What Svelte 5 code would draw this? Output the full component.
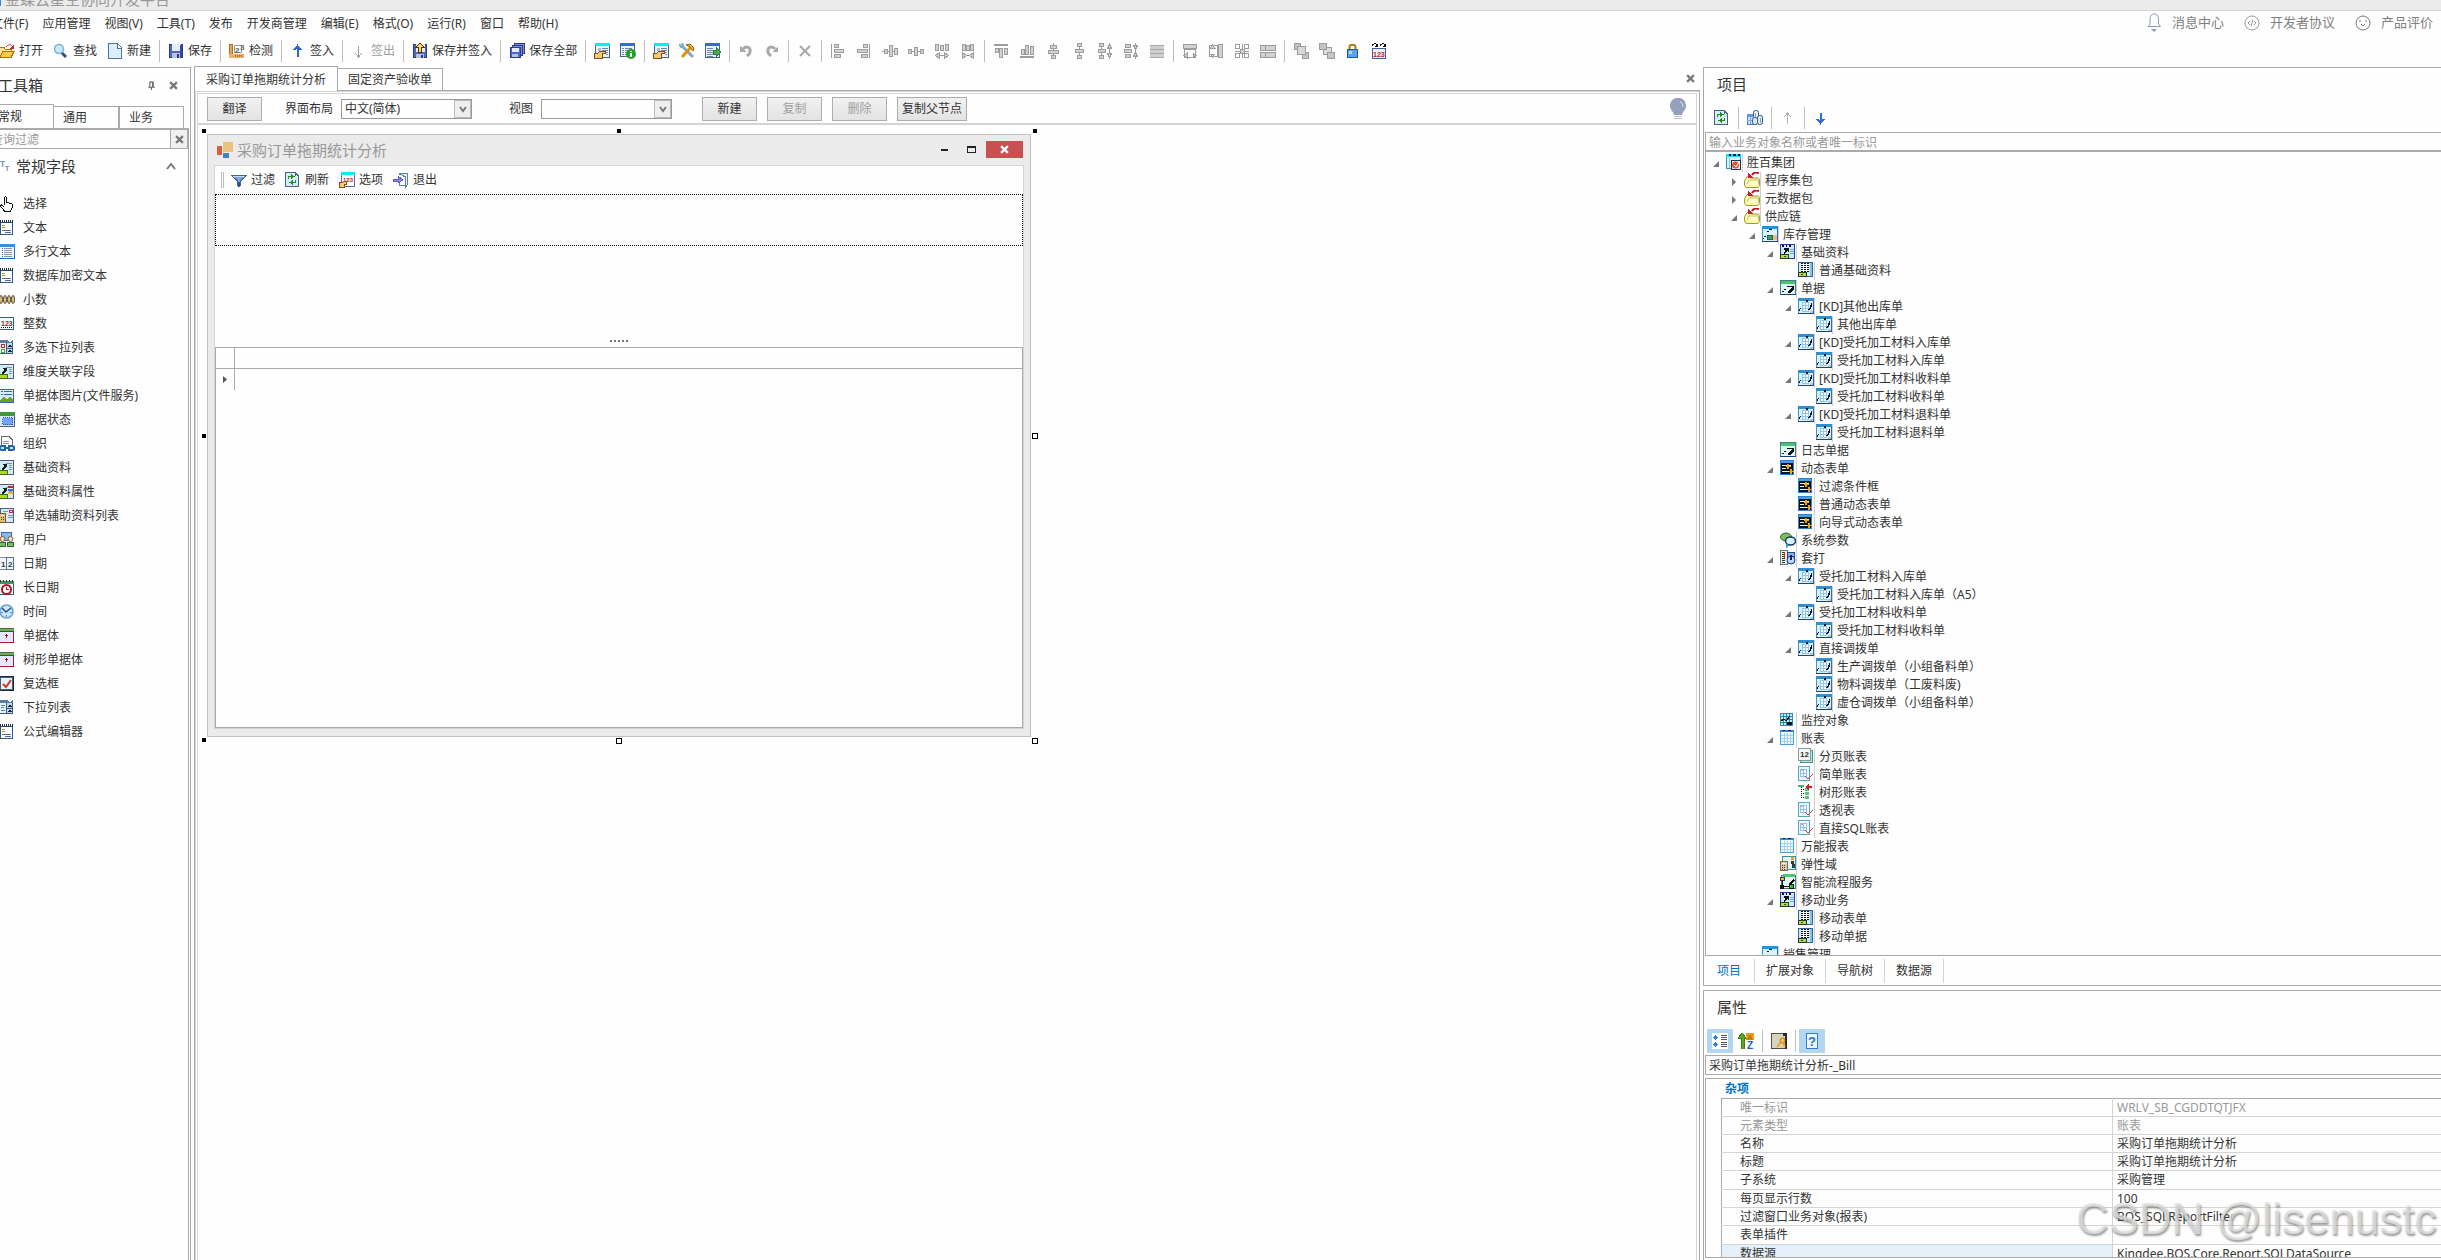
<script>
  const r = (x, y, w, h, f) => `<rect x="${x}" y="${y}" width="${w}" height="${h}" fill="${f}"/>`;
  const p = (d, f, s = 'none', w = 1) => `<path d="${d}" fill="${f}" stroke="${s}" stroke-width="${w}"/>`;
  const box = (x, y, w, h, f, s) => `<rect x="${x + 0.5}" y="${y + 0.5}" width="${w - 1}" height="${h - 1}" fill="${f}" stroke="${s}"/>`;
  const soft = (s) => `<g shape-rendering="auto">${s}</g>`;
  const num = (t, x, y, size, f) => `<text x="${x}" y="${y}" font-family="Liberation Sans, sans-serif" font-weight="700" font-size="${size}" fill="${f}">${t}</text>`;

  const G = '#9c9c9c';
  const L = '#d2d2d2';
  const formHand =
    box(1, 0, 15, 15, '#eef3fb', '#47617f') + r(1, 0, 15, 3, '#12e8f4') + r(8, 5, 6, 1, '#6d87ab') + r(8, 7, 6, 1, '#6d87ab') + r(8, 9, 6, 1, '#6d87ab') + r(12, 11, 2, 1, '#6d87ab') + r(4, 5, 3, 3, '#a9bdd8') +
    p('M0.5 10.5H3L6 8.5H11V10.5H8V15.5H0.5Z', '#f3c877', '#7a5320');
  const checkBase = box(0, 0, 15, 15, '#d6eaf2', '#4a5f80') + r(7, 3, 6, 1, '#7e95a8') + r(10, 5, 3, 1, '#7e95a8') + r(10, 7, 3, 1, '#7e95a8') + r(10, 9, 3, 1, '#7e95a8') +
    p('M2 9L5 6L4 4H8V8L7 7L4 10Z', '#13201c') + box(0, 10, 9, 5, '#a8dc1d', '#47701a');
  const sheet = r(0, 0, 16, 15, '#d9f2fc') + r(0, 0, 16, 3, '#2f8fd0') + r(0, 3, 1, 12, '#3f93c8') + r(0, 15, 16, 1, '#2a3e7d') + r(15, 3, 1, 12, '#3f63a8');
  const bill = sheet + r(5, 4, 6, 9, '#ffffff') + [4, 7, 10].map((x) => r(x, 4, 1, 9, '#8cc6f4')).join('') + [4, 7, 10, 13].map((y) => r(4, y, 7, 1, '#8cc6f4')).join('') + r(8, 2, 2, 2, '#0c1522') +
    p('M14 5V8L12 12H10V11L12 9L13 5Z', '#0c1522') + r(1, 11, 1, 2, '#0c1522') + r(2, 10, 1, 1, '#0c1522') + r(12, 13, 3, 2, '#a7d3b4');
  const greenBill = r(0, 2, 16, 13, '#e0f6f1') + r(1, 0, 14, 4, '#4cc46e') + box(0, 0, 16, 15, 'none', '#3f7e88') + p('M7 6H14V9L11 13H8V11L10 10L12 7H7Z', '#10191c') + r(2, 11, 2, 1, '#10191c') + r(4, 9, 2, 1, '#10191c') + r(0, 14, 16, 1, '#203a78');
  const folder = soft(p('M0.5 9L3 4.5H6.5L7.5 6H14.5L15.5 8V13.5L14 15.5H2L0.5 13Z', '#fdf9a4', '#9a9c42') + p('M3 12L5 8H14L15 13', '#fffcd0', '#c3c070') + p('M15 1C11 0 9 1 8 3', 'none', '#c91622', 2)) + p('M4 1V6H10Z', '#d21b26');
  const keyed = box(0, 0, 15, 15, '#c9ecf6', '#2f63a2') + r(3, 1, 8, 9, '#ffffff') + [1, 3, 5, 7, 9].map((y) => r(3, y, 2, 1, '#111') + r(6, y, 2, 1, '#111') + r(9, y, 2, 1, '#111')).join('') + r(12, 1, 2, 13, '#88c4e0') + box(0, 10, 9, 5, '#b3e41d', '#26391c') + r(3, 12, 2, 1, '#26391c');
  const base2 = box(0, 0, 15, 15, '#c9ecf6', '#2f3b98') + r(2, 1, 2, 2, '#111') + r(6, 1, 1, 2, '#111') + r(9, 1, 2, 2, '#111') + r(10, 5, 4, 1, '#79a6d0') + r(10, 7, 4, 1, '#79a6d0') + r(10, 9, 4, 1, '#79a6d0') + p('M3 9L5 7L4 6V4H9V8H8L7 7L4 10Z', '#111') + box(0, 10, 9, 5, '#b3e41d', '#26391c') + r(4, 12, 2, 1, '#26391c');
  const dyn = r(0, 0, 14, 15, '#0b1219') + r(0, 0, 14, 3, '#3ba4e6') + box(0, 0, 14, 15, 'none', '#2a82cf') + r(2, 5, 9, 1, '#f2f2f2') + r(2, 8, 4, 1, '#f2f2f2') + r(2, 11, 7, 1, '#f2f2f2') + r(7, 4, 2, 5, '#e9a800') + r(6, 6, 5, 1, '#e9a800') + r(10, 9, 2, 5, '#e9a800') + r(9, 11, 5, 1, '#e9a800');
  const gridSheet = box(0, 0, 14, 15, '#eef8fe', '#4aa0dc') + r(0, 0, 14, 2, '#2690dd') + r(3, 0, 2, 1, '#0c1522') + r(8, 0, 3, 1, '#0c1522') + [4, 7, 10].map((x) => r(x, 3, 1, 11, '#a4d2f2')).join('') + [5, 8, 11].map((y) => r(1, y, 12, 1, '#a4d2f2')).join('');
  const redCheckSheet = box(0, 0, 12, 15, '#ecf4fd', '#56a8b5') + r(2, 3, 7, 8, '#8ec0f2') + r(3, 5, 2, 2, '#fff') + r(6, 4, 2, 3, '#fff') + r(3, 8, 2, 2, '#fff') + r(6, 8, 2, 2, '#fff') + soft(p('M7 10L10 13L15 8', 'none', '#dc2f38', 1));
  const entry = r(0, 0, 15, 3, '#6fae55') + box(0, 3, 15, 12, '#e2e9ff', '#b01623') + r(7, 6, 1, 4, '#b01623') + r(6, 7, 3, 1, '#b01623') + r(0, 0, 15, 1, '#47704f');
  const refresh = p('M0.5 0.5H10L13.5 4V14.5H0.5Z', '#d6ecf8', '#46637f') + r(10, 1, 1, 3, '#46637f') + r(3, 4, 1, 3, '#228c1d') + r(3, 4, 5, 1, '#228c1d') + p('M6 2L10 4.500L6 7Z', '#228c1d') + r(10, 8, 1, 3, '#228c1d') + r(6, 10, 5, 1, '#228c1d') + p('M8 8L4 10.500L8 13Z', '#228c1d');
  const note = box(1, 2, 13, 13, '#ffffff', '#35587f') + [1, 3, 5, 7, 9, 11, 13].map((x) => r(x, 0, 1, 3, '#20324a')).join('') + r(3, 5, 3, 1, '#b49a2c') + r(3, 7, 3, 1, '#b49a2c') + r(3, 10, 9, 1, '#4d6ea0') + r(6, 12, 6, 1, '#4d6ea0');
  const listBase = box(0, 0, 14, 14, '#e9f3fb', '#3d5b80') + r(0, 0, 14, 3, '#5a7da5') + r(8, 3, 5, 10, '#c1d6e8') + r(7, 3, 1, 11, '#3d5b80') + r(8, 8, 6, 1, '#3d5b80') + p('M9 7H13L11 4Z', '#17273a') + p('M9 12H13L11 9Z', '#17273a') + p('M8 0H13L11 3Z', '#fff');

  const icons = {
    open: p('M0.5 14V4.5H5L6.5 6.5H12V9', '#ffe293', '#a9731a') + p('M0.5 14.5L4 8.5H15L12 14.5Z', '#ffc94a', '#a9731a') + soft(p('M7 4C9 1 12 1 14 4', 'none', '#d8231c', 1)) + p('M15 1V6H10Z', '#d8231c'),
    find: soft('<circle cx="6" cy="6" r="4.5" fill="#c5e8f8" stroke="#7fb0cf" stroke-width="1.5"/>' + p('M9 10L13 14', 'none', '#31527a', 3)),
    new: p('M1.5 0.5H10L14.5 5V15.5H1.5Z', '#dcefff', '#4c7398') + p('M10 1V5H14', '#ffffff', '#4c7398'),
    save: box(1, 1, 14, 14, '#5067c4', '#2b3a88') + r(4, 1, 9, 7, '#e6ecfb') + r(4, 10, 8, 5, '#b9c0da') + r(9, 11, 2, 4, '#2b3a88') + r(12, 2, 2, 12, '#3c4aa2'),
    test: box(0, 1, 4, 14, '#e2a45c', '#b06d25') + r(0, 11, 15, 4, '#e9b06c') + [6, 8, 10, 12].map((x) => r(x, 12, 1, 2, '#b06d25')).join('') + box(5, 2, 8, 8, '#ffffff', '#9a9a9a') + num('2', 6, 10, 8, '#555') + num('3', 11, 7, 8, '#666'),
    up: p('M7.5 14V3M4 7L7.5 3L11 7', 'none', '#2f63cf', 2),
    down: p('M7.5 3V13M4 9L7.5 13L11 9', 'none', '#2f6fdc', 2),
    upGray: p('M7.5 14V3M4 7L7.5 3L11 7', 'none', '#b0b0b0', 1),
    downGray: p('M7.5 3V14M4 10L7.5 14L11 10', 'none', '#a2a2a2', 1),
    saveIn: box(1, 1, 14, 14, '#5067c4', '#2b3a88') + r(4, 1, 9, 8, '#f5eacb') + r(4, 11, 8, 4, '#b9c0da') + p('M8 0L12 4H9.5V9H6.5V4H4Z', '#ffd368', '#3a3420') + r(9, 12, 2, 3, '#2b3a88'),
    saveAll: box(5, 0, 11, 11, '#8390d8', '#2b3a88') + box(3, 2, 11, 11, '#8390d8', '#2b3a88') + box(1, 4, 11, 11, '#5067c4', '#2b3a88') + r(3, 5, 7, 4, '#e6ecfb') + r(3, 11, 6, 3, '#b9c0da'),
    formHand,
    formInfo: box(0, 0, 15, 14, '#eef3fb', '#47617f') + r(0, 0, 15, 3, '#3b68d6') + [5, 7, 9, 11].map((y) => r(2, y, 2, 1, '#6d87ab') + r(5, y, 7, 1, '#6d87ab')).join('') + soft('<circle cx="11" cy="11" r="5" fill="#23a021"/>') + r(10, 8, 2, 1, '#fff') + r(10, 10, 2, 4, '#fff'),
    tools: soft(p('M2 2L14 14', 'none', '#7fa9c8', 3) + p('M3 14L12 4', 'none', '#e0940c', 3) + p('M7 2L11 1L15 5L14 8L11 4Z', '#f3b816', '#8d6212') + p('M0 1L2 4L4 3L3 0', 'none', '#7fa9c8', 2)),
    formGo: box(0, 0, 15, 15, '#eef3fb', '#47617f') + r(0, 0, 15, 3, '#3b68d6') + [5, 7, 9, 11, 13].map((y) => r(2, y, 6, 1, '#6d87ab')).join('') + p('M8 7H11V4L16 9L11 14V11H8Z', '#49ab45', '#2f7d32'),
    undo: soft(p('M5 6C9 2 13 5 12 9C12 11 10 12 9 13', 'none', '#a8a8a8', 3)) + p('M2 3V9H8Z', '#a8a8a8'),
    redo: soft(p('M11 6C7 2 3 5 4 9C4 11 6 12 7 13', 'none', '#a8a8a8', 3)) + p('M14 3V9H8Z', '#a8a8a8'),
    del: soft(p('M3 3L13 13M13 3L3 13', 'none', '#a8a8a8', 2)),
    alL: r(1, 1, 1, 14, G) + box(4, 1, 5, 4, L, G) + box(4, 6, 10, 4, L, G) + box(4, 11, 7, 4, L, G),
    alR: r(13, 1, 1, 14, G) + box(7, 1, 5, 4, L, G) + box(1, 6, 11, 4, L, G) + box(5, 11, 7, 4, L, G),
    alC: r(0, 8, 16, 1, G) + box(2, 6, 4, 5, L, G) + box(7, 2, 4, 12, L, G) + box(12, 5, 4, 7, L, G),
    alM: r(0, 8, 16, 1, G) + box(0, 6, 4, 5, L, G) + box(6, 4, 4, 9, L, G) + box(12, 6, 4, 5, L, G),
    spH: box(1, 1, 4, 7, L, G) + box(6, 2, 4, 6, L, G) + box(11, 1, 4, 7, L, G) + r(2, 12, 12, 1, G) + p('M5.500 9.500V15.500L1.500 12.500Z', L, G) + p('M10.500 9.500V15.500L14.500 12.500Z', L, G),
    spH2: box(2, 1, 4, 7, L, G) + box(6, 2, 4, 6, L, G) + box(10, 1, 4, 7, L, G) + r(2, 12, 12, 1, G) + p('M2.500 9.500V15.500L6.500 12.500Z', L, G) + p('M13.500 9.500V15.500L9.500 12.500Z', L, G),
    alT: r(1, 1, 14, 2, G) + box(2, 5, 4, 5, L, G) + box(6, 5, 4, 10, L, G) + box(11, 5, 4, 7, L, G),
    alB: r(1, 13, 14, 2, G) + box(2, 6, 4, 6, L, G) + box(6, 2, 4, 10, L, G) + box(11, 3, 4, 9, L, G),
    alV: r(8, 0, 1, 16, G) + box(5, 2, 7, 4, L, G) + box(3, 7, 11, 4, L, G) + box(6, 12, 5, 4, L, G),
    alV2: r(8, 0, 1, 16, G) + box(6, 0, 5, 4, L, G) + box(4, 6, 9, 4, L, G) + box(6, 12, 5, 4, L, G),
    spV: r(4, 1, 1, 14, G) + box(2, 0, 5, 4, L, G) + box(1, 6, 8, 4, L, G) + box(2, 12, 5, 4, L, G) + r(12, 2, 1, 12, G) + p('M10.500 5.500L12.500 1.500L14.500 5.500ZM10.500 10.500L12.500 14.500L14.500 10.500Z', L, G),
    spV2: box(2, 1, 6, 4, L, G) + box(1, 6, 8, 4, L, G) + box(2, 11, 6, 4, L, G) + r(12, 0, 1, 16, G) + p('M10.500 2.500L12.500 6.500L14.500 2.500ZM10.500 13.500L12.500 9.500L14.500 13.500Z', L, G),
    rows: r(1, 2, 14, 13, '#cfcfcf') + [2, 6, 10, 14].map((y) => r(1, y, 14, 1, '#a8a8a8')).join(''),
    sameW: box(1, 1, 14, 5, L, G) + box(2, 6, 12, 9, '#fff', G) + p('M5 10V15L2 12.5ZM11 10V15L14 12.5Z', L, G),
    sameH: box(10, 1, 5, 14, L, G) + box(1, 2, 9, 12, '#fff', G) + p('M2 5L4.5 2L7 5ZM2 11L4.5 14L7 11Z', L, G),
    sameB: box(1, 1, 5, 5, '#fff', G) + box(10, 1, 5, 5, '#fff', G) + box(1, 10, 5, 5, '#fff', G) + box(10, 10, 5, 5, '#fff', G) + r(8, 1, 1, 14, G) + r(1, 8, 14, 1, G) + box(6, 6, 5, 5, L, G),
    split: box(0, 2, 16, 6, L, G) + box(0, 9, 16, 6, L, G) + r(5, 2, 1, 6, G) + r(5, 9, 1, 6, G),
    front: box(1, 0, 7, 7, '#c4c4c4', G) + box(9, 9, 7, 7, '#c4c4c4', G) + box(4, 3, 9, 9, '#d8d8d8', G),
    back: box(4, 4, 9, 8, '#dcdcdc', G) + box(0, 0, 8, 7, '#c4c4c4', G) + box(8, 9, 8, 7, '#c4c4c4', G),
    lock: soft(p('M4.5 7V4C4.5 1 10.5 1 10.5 4V7', 'none', '#b87718', 2)) + box(2, 6, 11, 9, '#58a6ea', '#24598f') + r(4, 8, 3, 3, '#a9d5f7'),
    tabOrder: p('M1 3C2 0 5 0 6 2M9 3C10 0 13 0 14 2', 'none', '#111') + p('M7 0V4H4ZM15 0V4H12Z', '#111') + box(1, 5, 14, 11, '#eef3ff', '#4457a8') + num('123', 2, 14, 7, '#c01822'),
    tt: num('T', 0, 10, 12, '#6d93cf') + num('T', 7, 15, 11, '#6d93cf'),
    hand: p('M5.5 9V2L6.5 0.5L7.5 2V6L13 8V12L11.5 15.5H6L1.5 10.5L2.5 8.5L5 11', '#fff', '#111'),
    note,
    lines: box(0, 0, 16, 15, '#f3f8fe', '#2c69b3') + r(0, 0, 16, 3, '#3f8bd8') + [4, 6, 8, 10, 12].map((y) => r(3, y, 1, 1, '#2c69b3') + r(5, y, 8, 1, '#8d98a6')).join(''),
    decimal: soft([2, 6, 10, 14].map((x) => `<ellipse cx="${x}" cy="7.5" rx="1.5" ry="4" fill="#e5c98f" stroke="#4a4133"/>`).join('')) + r(0, 12, 1, 1, '#333'),
    int: box(0, 1, 15, 13, '#f5f6fb', '#3d5b80') + num('123', 2, 10, 7, '#b01822') + [2, 4, 6, 8, 10, 12].map((x) => r(x, 11, 1, 1, '#111')).join(''),
    multi: listBase + box(2, 4, 4, 4, '#fff', '#c1272d') + box(2, 9, 4, 4, '#fff', '#4aa532'),
    drop: listBase + r(2, 5, 4, 1, '#3f83c8') + r(2, 7, 3, 1, '#3f83c8') + r(2, 10, 4, 1, '#3f83c8'),
    base: checkBase,
    pic: box(0, 1, 15, 14, '#d7ecfa', '#2c69b3') + r(2, 3, 2, 1, '#2c69b3') + r(5, 3, 8, 1, '#2c69b3') + r(2, 6, 2, 1, '#2c69b3') + r(5, 6, 8, 1, '#2c69b3') + p('M1 14V12L5 9L8 11L11 9L14 11V14Z', '#6aa32c'),
    status: box(0, 0, 16, 15, '#d8e8fb', '#47617f') + r(0, 0, 16, 4, '#3f9a3d') + '<rect x="3.5" y="5.5" width="10" height="7" fill="#6fa4ff" stroke="#2c4f9c" stroke-dasharray="1 1"/>',
    org: p('M2.5 10V0.5H10L13.5 4V10', '#fff', '#6a6a6a') + r(4, 5, 6, 1, '#999') + r(4, 7, 6, 1, '#999') + soft(p('M3 10H6V14H3C0 14 0 10 3 10ZM10 10H13C16 10 16 14 13 14H10ZM5 12H11', '#cfe6fa', '#1d64a8', 2)),
    baseAttr: checkBase + r(9, 2, 5, 2, '#e01b1b') + r(9, 5, 5, 2, '#3f6fe0') + r(9, 8, 5, 2, '#f3b816'),
    assist: box(1, 0, 14, 15, '#dbe9f6', '#47617f') + r(4, 3, 5, 1, '#7a93b5') + r(9, 7, 5, 1, '#7a93b5') + r(9, 9, 5, 1, '#7a93b5') + box(10, 2, 4, 3, '#fff', '#d23') + box(0, 5, 7, 10, '#e0c081', '#7d5b26') + r(2, 7, 3, 1, '#fff') + r(2, 9, 1, 1, '#5b4116') + r(4, 9, 1, 1, '#5b4116') + r(2, 11, 1, 1, '#5b4116') + r(4, 11, 1, 1, '#5b4116'),
    user: box(2, 0, 11, 9, '#8bb7f1', '#3c6cb5') + soft('<circle cx="3.5" cy="7" r="2.5" fill="#f8dcb8" stroke="#7c5c3c"/><circle cx="11.5" cy="7" r="2.5" fill="#f8dcb8" stroke="#7c5c3c"/>') + box(0, 10, 7, 5, '#6fc067', '#33652f') + box(8, 10, 7, 5, '#6fc067', '#33652f'),
    date: box(0, 1, 8, 13, '#f3f5f8', '#7c94ab') + box(7, 1, 8, 13, '#f3f5f8', '#55718f') + num('1', 2, 11, 8, '#26374e') + num('2', 9, 11, 8, '#26374e'),
    longdate: box(0, 1, 15, 14, '#f3f8fa', '#3d5b80') + r(0, 1, 15, 3, '#3a9a5c') + [1, 4, 7, 10, 13].map((x) => r(x, 0, 1, 2, '#234')).join('') + soft('<circle cx="7.5" cy="9.500" r="4.500" fill="#fff" stroke="#b01623" stroke-width="2"/>') + r(7, 7, 1, 3, '#b01623') + r(7, 9, 3, 1, '#b01623'),
    time: soft('<circle cx="7.500" cy="7.500" r="6.500" fill="#c9e6fb" stroke="#6fa0d4" stroke-width="1.500"/>' + p('M3 4L7 8L12 4', 'none', '#27508c', 1.5)) + r(7, 11, 1, 2, '#5b8fc4') + r(2, 8, 2, 1, '#5b8fc4') + r(11, 8, 2, 1, '#5b8fc4'),
    entry,
    check: box(0, 0, 15, 15, '#f4f7fb', '#1d2a3a') + box(1, 1, 13, 13, '#e6f1f8', '#47617f') + soft(p('M4 8L7 11L12 4', 'none', '#cf3a1c', 2)),
    filter: p('M0.5 3.5H15.5L9.5 9V13L6.5 13.500V9Z', '#7fa6e6', '#3c63ae') + r(2, 4, 11, 1, '#c8dbf8') + r(7, 10, 2, 5, '#2f4f94'),
    refresh,
    options: box(2, 1, 14, 14, '#fff', '#5a6c9c') + r(2, 0, 14, 3, '#12e8f4') + num('123', 4, 10, 6, '#c01822') + p('M0.5 10.5H3L5 9.500H7V12H5V15.500H0.5Z', '#f3c877', '#7a5320'),
    exit: p('M6 1.500H14.500V12.500L12.500 15V5L6 1.500Z', '#e4f2fb', '#5586a8') + p('M6 1V3M6 10V13H12', 'none', '#5586a8') + p('M0 7H5V4L10 8L5 11V9H0Z', '#8d8df0', '#5b5bd0'),
    winform: r(0, 4, 5, 9, '#d9603f') + r(6, 0, 10, 10, '#ebc17d') + r(6, 11, 6, 5, '#4a82bd'),
    project: box(0, 1, 15, 14, '#d9f1fa', '#3f8fb5') + r(0, 0, 15, 3, '#18d8f2') + r(3, 0, 2, 2, '#0c1522') + r(7, 0, 3, 2, '#0c1522') + r(12, 0, 2, 2, '#0c1522') + r(3, 4, 1, 10, '#8fc5de') + box(5, 6, 10, 10, '#f4e9ea', '#23324f') + soft('<circle cx="9.500" cy="11" r="3.500" fill="#dd5530"/>' + p('M8 11L10 13L13 8', 'none', '#fff', 1)),
    folder,
    module: sheet + r(7, 3, 3, 1, '#0c1522') + r(5, 5, 2, 1, '#0c1522') + r(2, 10, 2, 1, '#0c1522') + r(1, 12, 1, 1, '#0c1522') + box(5, 9, 6, 5, '#2fa36b', '#1c6e48') + r(11, 9, 4, 5, '#f2b58d'),
    base2,
    keyed,
    greenBill,
    bill,
    dyn,
    params: soft('<ellipse cx="6" cy="5" rx="5.500" ry="4" fill="#7dbb62" stroke="#2d6a2c"/><ellipse cx="10.500" cy="9" rx="5" ry="4" fill="#d5f0fb" stroke="#123a5e" stroke-width="1.500"/>') + p('M6 12V16L10 13Z', '#3b9cc8'),
    print: box(0, 0, 8, 15, '#e9efe6', '#5c7c72') + [2, 4, 6, 8, 10, 12].map((y) => r(2, y, 3, 1, '#333')).join('') + r(4, 2, 1, 6, '#d22') + box(7, 2, 8, 11, '#7fb4ee', '#23458f') + soft('<circle cx="11" cy="10" r="4" fill="#b7d6fb" stroke="#23308f"/>') + r(10, 5, 2, 5, '#16244c'),
    monitor: box(0, 1, 13, 13, '#c4ecf6', '#2a8fb3') + [3, 6, 9].map((x) => r(x, 1, 1, 12, '#2d7fae')).join('') + [4, 7, 10].map((y) => r(0, y, 13, 1, '#2d7fae')).join('') + p('M1 9L4 7L6 9L10 4', 'none', '#0c1522') + r(7, 10, 5, 3, '#0c1522'),
    gridSheet,
    paged: box(2, 2, 13, 13, '#bfe3dd', '#4a8f8a') + box(0, 0, 13, 13, '#f6f6f4', '#7b9f9b') + num('12', 2, 9, 8, '#333'),
    redCheckSheet,
    treeRep: [1, 3, 5, 7, 9, 11, 13].map((y) => r(3, y, 1, 1, '#111')).join('') + [5, 9, 13].map((y) => r(5, y, 1, 1, '#111') + r(7, y - 1, 4, 3, '#56c782')).join('') + r(0, 1, 6, 2, '#3fb46c') + p('M7 3L11 0V2H14V4H11V6Z', '#e21b1b'),
    flex: box(2, 0, 14, 14, '#e2f6f8', '#3f8fa5') + r(11, 1, 3, 3, '#e7a51b') + r(11, 5, 3, 3, '#3e3518') + r(12, 8, 3, 4, '#27444b') + box(0, 5, 8, 10, '#dcc7a8', '#7d6b52') + r(2, 7, 4, 1, '#fff') + [9, 11, 13].map((y) => r(2, y, 1, 1, '#444') + r(4, y, 1, 1, '#444')).join(''),
    flow: box(1, 1, 15, 14, '#e5f6f3', '#3f7e88') + r(3, 0, 12, 3, '#4cc46e') + box(0, 3, 5, 4, '#f6c21c', '#333') + r(2, 7, 1, 4, '#111') + r(0, 11, 4, 4, '#111') + r(4, 12, 6, 1, '#111') + p('M13 5L15 6L11 11L9 10Z', '#111') + box(9, 10, 5, 5, '#19d41f', '#111'),
    extObj: box(0, 4, 10, 11, '#cfe2fa', '#4d7fb8') + r(0, 4, 10, 3, '#5f97e8') + r(3, 7, 1, 7, '#7ba7dc') + r(0, 10, 10, 1, '#7ba7dc') + soft('<rect x="6.500" y="0.500" width="5" height="8" rx="2" fill="#e8eff8" stroke="#35587f"/><rect x="10.500" y="5.500" width="5" height="9" rx="2" fill="#dbe6f2" stroke="#35587f"/><rect x="5.500" y="7.500" width="5" height="7" rx="2" fill="#dbe6f2" stroke="#35587f"/>') + r(8, 3, 1, 4, '#8aa5c2') + r(13, 8, 1, 5, '#8aa5c2'),
    categ: r(0, 0, 16, 16, '#fff') + r(1, 4, 5, 1, '#2b7fe0') + r(3, 2, 1, 5, '#2b7fe0') + r(1, 11, 5, 1, '#2b7fe0') + r(3, 9, 1, 5, '#2b7fe0') + r(2, 3, 3, 3, '#2b7fe0') + r(2, 10, 3, 3, '#2b7fe0') + [2, 4, 6, 9, 11, 13].map((y) => r(9, y, 6, 1, '#555')).join(''),
    sort: p('M4 0L8 5H6V16H3V5H0Z', '#58ab1e', '#39801a') + r(8, 0, 8, 7, '#ef9a16') + num('A', 9, 7, 8, '#b86a00') + num('Z', 9, 16, 10, '#1f5fc0'),
    pages: box(0, 0, 16, 16, '#d8d3c0', '#55503f') + p('M12 0H16V16H14V3H12Z', '#2b2a26') + soft(p('M6 14L10 9', 'none', '#eda52b', 2) + '<circle cx="11.500" cy="7.500" r="2.500" fill="#f5c04f" stroke="#b97c14"/>' + p('M12 10L14 14', 'none', '#eda52b', 2)),
    helpDoc: box(2, 0, 12, 16, '#eef6ff', '#2f7fd8') + num('?', 4, 13, 13, '#1e6fdc')
  };

  const menus = ['文件(F)', '应用管理', '视图(V)', '工具(T)', '发布', '开发商管理', '编辑(E)', '格式(O)', '运行(R)', '窗口', '帮助(H)'];
  const toolbar = [
    [['open', '打开'], ['find', '查找'], ['new', '新建']],
    [['save', '保存']],
    [['test', '检测']],
    [['up', '签入']],
    [['downGray', '签出', true]],
    [['saveIn', '保存并签入']],
    [['saveAll', '保存全部']],
    [['formHand'], ['formInfo']],
    [['formHand'], ['tools'], ['formGo']],
    [['undo'], ['redo']],
    [['del']],
    [['alL'], ['alR'], ['alC'], ['alM'], ['spH'], ['spH2']],
    [['alT'], ['alB'], ['alV'], ['alV2'], ['spV'], ['spV2'], ['rows']],
    [['sameW'], ['sameH'], ['sameB'], ['split']],
    [['front'], ['back'], ['lock'], ['tabOrder']]
  ];
  const fields = [
    ['hand', '选择'], ['note', '文本'], ['lines', '多行文本'], ['note', '数据库加密文本'], ['decimal', '小数'], ['int', '整数'],
    ['multi', '多选下拉列表'], ['base', '维度关联字段'], ['pic', '单据体图片(文件服务)'], ['status', '单据状态'], ['org', '组织'],
    ['base', '基础资料'], ['baseAttr', '基础资料属性'], ['assist', '单选辅助资料列表'], ['user', '用户'], ['date', '日期'],
    ['longdate', '长日期'], ['time', '时间'], ['entry', '单据体'], ['entry', '树形单据体'], ['check', '复选框'], ['drop', '下拉列表'], ['note', '公式编辑器']
  ];
  const formTools = [['filter', '过滤'], ['refresh', '刷新'], ['options', '选项'], ['exit', '退出']];
  const tree = [
    [0, 'open', 'project', '胜百集团'], [1, 'shut', 'folder', '程序集包'], [1, 'shut', 'folder', '元数据包'], [1, 'open', 'folder', '供应链'],
    [2, 'open', 'module', '库存管理'], [3, 'open', 'base2', '基础资料'], [4, '', 'keyed', '普通基础资料'], [3, 'open', 'greenBill', '单据'],
    [4, 'open', 'bill', '[KD]其他出库单'], [5, '', 'bill', '其他出库单'], [4, 'open', 'bill', '[KD]受托加工材料入库单'], [5, '', 'bill', '受托加工材料入库单'],
    [4, 'open', 'bill', '[KD]受托加工材料收料单'], [5, '', 'bill', '受托加工材料收料单'], [4, 'open', 'bill', '[KD]受托加工材料退料单'], [5, '', 'bill', '受托加工材料退料单'],
    [3, '', 'greenBill', '日志单据'], [3, 'open', 'dyn', '动态表单'], [4, '', 'dyn', '过滤条件框'], [4, '', 'dyn', '普通动态表单'], [4, '', 'dyn', '向导式动态表单'],
    [3, '', 'params', '系统参数'], [3, 'open', 'print', '套打'], [4, 'open', 'bill', '受托加工材料入库单'], [5, '', 'bill', '受托加工材料入库单（A5）'],
    [4, 'open', 'bill', '受托加工材料收料单'], [5, '', 'bill', '受托加工材料收料单'], [4, 'open', 'bill', '直接调拨单'], [5, '', 'bill', '生产调拨单（小组备料单）'],
    [5, '', 'bill', '物料调拨单（工废料废)'], [5, '', 'bill', '虚仓调拨单（小组备料单）'], [3, '', 'monitor', '监控对象'], [3, 'open', 'gridSheet', '账表'],
    [4, '', 'paged', '分页账表'], [4, '', 'redCheckSheet', '简单账表'], [4, '', 'treeRep', '树形账表'], [4, '', 'redCheckSheet', '透视表'], [4, '', 'redCheckSheet', '直接SQL账表'],
    [3, '', 'gridSheet', '万能报表'], [3, '', 'flex', '弹性域'], [3, '', 'flow', '智能流程服务'], [3, 'open', 'base2', '移动业务'],
    [4, '', 'keyed', '移动表单'], [4, '', 'keyed', '移动单据'], [2, '', 'module', '销售管理']
  ];
  const panelTabs = ['项目', '扩展对象', '导航树', '数据源'];
  const props = [
    ['唯一标识', 'WRLV_SB_CGDDTQTJFX', 'readonly'], ['元素类型', '账表', 'readonly'], ['名称', '采购订单拖期统计分析'], ['标题', '采购订单拖期统计分析'],
    ['子系统', '采购管理', 'picker'], ['每页显示行数', '100'], ['过滤窗口业务对象(报表)', 'BOS_SQLReportFilter'], ['表单插件', '', 'picker'], ['数据源', 'Kingdee.BOS.Core.Report.SQLDataSource', 'current']
  ];
  const handles = ['tl', 'tc', 'tr', 'ml', 'mr', 'bl', 'bc', 'br'];
</script>

{#snippet icon(name)}
  <svg class="icon" viewBox="0 0 16 16" aria-hidden="true">{@html icons[name]}</svg>
{/snippet}

{#snippet cross()}
  <svg class="cross" viewBox="0 0 8 8" aria-hidden="true"><path d="M1 1L7 7M7 1L1 7" /></svg>
{/snippet}

<div class="app">
  <div class="titlebar"><span class="app-mark"></span><span>金蝶云星空协同开发平台</span></div>

  <header>
    <div class="commands">
      <nav class="menu" aria-label="菜单">
        {#each menus as m}<button>{m}</button>{/each}
      </nav>
      <div class="toolbar">
        {#each toolbar as group}
          <div class="group">
            {#each group as [ic, label, off]}
              <button disabled={off} aria-label={label ?? ic}>{@render icon(ic)}{#if label}<span>{label}</span>{/if}</button>
            {/each}
          </div>
        {/each}
      </div>
    </div>
    <div class="links">
      <a href="#messages">
        <svg viewBox="0 0 16 20" aria-hidden="true"><path d="M2 14.500H14.500L12.500 12V7C12.500 0 4 0 4 7V12Z" fill="none" stroke="#8f9bb8" /><path d="M5 17H11L8 20Z" fill="#8f9bb8" /></svg>
        消息中心
      </a>
      <a href="#agreement">
        <svg viewBox="0 0 16 20" aria-hidden="true"><circle cx="8" cy="11" r="7" fill="none" stroke="#999" /><path d="M6 9L4 11L6 13M10 9L12 11L10 13M9 8L7 14" fill="none" stroke="#999" /></svg>
        开发者协议
      </a>
      <a href="#feedback">
        <svg viewBox="0 0 16 20" aria-hidden="true"><circle cx="8" cy="11" r="7" fill="none" stroke="#777" /><path d="M5 8V10M11 8V10M6 12L8 14L10 12" fill="none" stroke="#777" /></svg>
        产品评价
      </a>
    </div>
  </header>

  <main>
    <aside class="toolbox">
      <div class="box-head">
        <h2>工具箱</h2>
        <button aria-label="固定"><svg class="pin" viewBox="0 0 8 8" aria-hidden="true"><path d="M1 5.500H7M2.500 5V1H5.500V5M4 6V8M5 1V5" /></svg></button>
        <button aria-label="关闭">{@render cross()}</button>
      </div>
      <div class="box-tabs">
        <button class="on">常规</button><button>通用</button><button>业务</button>
      </div>
      <div class="box-body">
        <div class="search">
          <input aria-label="查询过滤" placeholder="查询过滤" />
          <button aria-label="清除">{@render cross()}</button>
        </div>
        <button class="section">
          {@render icon('tt')}<span>常规字段</span>
          <svg class="chev" viewBox="0 0 10 8" aria-hidden="true"><path d="M1 7L5 2L9 7" /></svg>
        </button>
        <ul>
          {#each fields as [ic, label]}
            <li><button>{@render icon(ic)}{label}</button></li>
          {/each}
        </ul>
      </div>
    </aside>

    <section class="docs">
      <div class="doc-tabs">
        <button class="on">采购订单拖期统计分析</button>
        <button>固定资产验收单</button>
        <button class="doc-close" aria-label="关闭">{@render cross()}</button>
      </div>
      <div class="frame">
        <div class="doc">
          <div class="doc-bar">
            <button class="btn">翻译</button>
            <label class="field layout">界面布局
              <span class="combo"><select><option>中文(简体)</option></select><i><svg viewBox="0 0 8 8" aria-hidden="true"><path d="M1 2L4 6L7 2" /></svg></i></span>
            </label>
            <label class="field">视图
              <span class="combo"><select><option></option></select><i><svg viewBox="0 0 8 8" aria-hidden="true"><path d="M1 2L4 6L7 2" /></svg></i></span>
            </label>
            <div class="actions">
              <button class="btn">新建</button>
              <button class="btn" disabled>复制</button>
              <button class="btn" disabled>删除</button>
              <button class="btn wide">复制父节点</button>
            </div>
            <svg class="bulb" viewBox="0 0 18 22" aria-hidden="true"><path d="M5 17C5 14 1 12 1 8C1 -3 17 -3 17 8C17 12 13 14 13 17Z" fill="#94a0bc" /><path d="M5 18.500H13M5 20.500H13" stroke="#b9c1d3" /><path d="M11 4C13 4 14 6 14 9" fill="none" stroke="#dfe4ee" /></svg>
          </div>
          <div class="canvas">
            <div class="form">
              {#each handles as h}<span class="handle {h}"></span>{/each}
              <div class="form-title">
                {@render icon('winform')}<h1>采购订单拖期统计分析</h1>
                <button class="min" aria-label="最小化"></button>
                <button class="max" aria-label="最大化"></button>
                <button class="close" aria-label="关闭">{@render cross()}</button>
              </div>
              <div class="form-body">
                <div class="form-tools">
                  <span class="grip"></span>
                  {#each formTools as [ic, label]}<button>{@render icon(ic)}<span>{label}</span></button>{/each}
                </div>
                <div class="filter-box"></div>
                <div class="splitter"><i></i><i></i><i></i><i></i><i></i></div>
                <div class="grid">
                  <div class="grid-head"><span></span></div>
                  <div class="grid-row"><span><svg viewBox="0 0 4 7" aria-hidden="true"><path d="M0 0L4 3.500L0 7Z" fill="#555" /></svg></span></div>
                </div>
              </div>
            </div>
          </div>
        </div>
      </div>
    </section>

    <div class="side">
      <section class="panel">
        <h2>项目</h2>
        <div class="mini">
          <button aria-label="刷新">{@render icon('refresh')}</button><hr />
          <button aria-label="扩展">{@render icon('extObj')}</button><hr />
          <button aria-label="上移" disabled>{@render icon('upGray')}</button><hr />
          <button aria-label="下移">{@render icon('down')}</button>
        </div>
        <input class="query" aria-label="搜索" placeholder="输入业务对象名称或者唯一标识" />
        <ul class="tree">
          {#each tree as [level, state, ic, label]}
            <li style:padding-left="{level * 18 + 7}px">
              <svg class="twist" viewBox="0 0 8 8" aria-hidden="true">
                {#if state === 'open'}<path d="M6 1V7H0Z" />{:else if state === 'shut'}<path d="M1 0L5 4L1 8Z" />{/if}
              </svg>
              {@render icon(ic)}<span>{label}</span>
            </li>
          {/each}
        </ul>
        <div class="panel-tabs">
          {#each panelTabs as t, i}<button class:on={i === 0}>{t}</button>{/each}
        </div>
      </section>

      <section class="panel">
        <h2>属性</h2>
        <div class="mini props-bar">
          <button class="on" aria-label="分类">{@render icon('categ')}</button>
          <button aria-label="排序">{@render icon('sort')}</button><hr />
          <button aria-label="属性页">{@render icon('pages')}</button><hr />
          <button class="on" aria-label="说明">{@render icon('helpDoc')}</button>
        </div>
        <input class="object" aria-label="对象" value="采购订单拖期统计分析-_Bill" />
        <div class="props">
          <h3>杂项</h3>
          <table>
            <tbody>
              {#each props as [name, value, kind]}
                <tr class={kind}><th scope="row">{name}</th><td>{value}</td></tr>
              {/each}
            </tbody>
          </table>
        </div>
      </section>
    </div>
  </main>
  <div class="watermark">CSDN @lisenustc</div>
</div>

<style>
  :global(body) { overflow: hidden; background: #fefefe; }
  .app {
    --line: #aaaaaa; --soft: #d4d4d4; --ink: #333333;
    display: flex; flex-direction: column; height: 100vh; margin-left: -10px; position: relative;
    font: 12px/16px "Noto Sans", "Noto Sans CJK SC", sans-serif; color: var(--ink); background: #fefefe;
  }
  * { box-sizing: border-box; }
  button, input, select { font: inherit; color: inherit; background: none; border: 0; padding: 0; margin: 0; border-radius: 0; }
  button { white-space: nowrap; }
  h1, h2, h3, ul { margin: 0; padding: 0; font-weight: 400; list-style: none; }
  .icon { width: 16px; height: 16px; flex: none; shape-rendering: crispEdges; display: block; }
  .cross { width: 9px; height: 9px; display: block; fill: none; stroke: #777; stroke-width: 2; }
  button:disabled { color: #a0a0a0; }

  .titlebar { height: 11px; flex: none; display: flex; align-items: flex-end; gap: 4px; overflow: hidden; padding-left: 8px; background: #ebebeb; border-bottom: 1px solid var(--soft); color: #999; font-size: 15px; line-height: 18px; }
  .titlebar span { margin-bottom: 2px; }
  .titlebar .app-mark { width: 3px; height: 10px; background: #2f86e8; margin: 0 0 4px; }

  header { display: flex; justify-content: space-between; height: 55px; flex: none; }
  .menu { display: flex; gap: 14px; height: 26px; align-items: center; padding-left: 1px; }
  .toolbar { display: flex; height: 28px; align-items: center; padding-left: 4px; }
  .group { display: flex; align-items: center; }
  .group + .group::before { content: ""; width: 1px; height: 22px; background: #bdbdbd; margin: 0 3px; }
  .group button { display: flex; align-items: center; gap: 4px; padding: 0 5px; height: 22px; }
  .links { display: flex; gap: 20px; padding: 0 8px 0 0; height: 22px; align-items: center; font-size: 13px; }
  .links a { display: flex; align-items: center; gap: 10px; color: #808080; text-decoration: none; white-space: nowrap; }
  .links svg { width: 16px; height: 20px; }

  main { flex: 1; min-height: 0; display: grid; grid-template-columns: 201px minmax(0, 1fr) 738px; column-gap: 3px; }

  .toolbox { margin-top: 1px; border-top: 1px solid var(--line); border-right: 1px solid var(--line); padding-right: 1px; display: flex; flex-direction: column; }
  .box-head { display: flex; align-items: center; height: 36px; padding: 0 11px 2px 8px; gap: 13px; }
  h2 { font-size: 15px; line-height: 20px; }
  .box-head h2 { margin-right: auto; }
  .pin { display: block; width: 9px; height: 9px; fill: none; stroke: #666; }
  .box-tabs { display: flex; align-items: flex-end; height: 24px; }
  .box-tabs button { border: 1px solid var(--line); border-bottom: 0; height: 22px; text-align: left; padding-left: 9px; width: 65px; }
  .box-tabs button.on { height: 24px; border-left: 0; width: 64px; padding-left: 8px; }
  .box-tabs button:nth-child(2) { border-left: 0; }
  .box-body { flex: 1; border-top: 2px solid var(--line); border-right: 1px solid var(--line); }
  .search { display: flex; height: 19px; border-bottom: 1px solid var(--line); }
  .search input { flex: 1; min-width: 0; padding: 1px 0 0 1px; }
  input::placeholder { color: #999; opacity: 1; }
  .search button { width: 18px; background: #f0f0f0; border: 1px solid var(--line); border-width: 0 1px; display: grid; place-items: center; }
  .section { display: flex; align-items: center; width: 100%; height: 36px; padding: 0 12px 2px 10px; font-size: 15px; line-height: 20px; }
  .section .icon { width: 11px; margin-right: 5px; }
  .chev { width: 10px; height: 8px; margin-left: auto; fill: none; stroke: #777; stroke-width: 2; }
  .toolbox ul { padding: 7px 0 0 9px; }
  .toolbox li button { display: flex; align-items: center; gap: 8px; height: 24px; }

  .docs { display: flex; flex-direction: column; min-width: 0; }
  .doc-tabs { display: flex; align-items: flex-end; height: 24px; flex: none; }
  .doc-tabs button { border: 1px solid var(--line); border-bottom: 0; height: 22px; padding: 0 10px; margin-left: -1px; }
  .doc-tabs button.on { height: 25px; margin: 0 0 -1px; padding: 2px 11px 0; background: #fefefe; z-index: 1; }
  .doc-tabs .doc-close { border: 0; margin-left: auto; padding: 0 5px 2px; }
  .frame { flex: 1; min-height: 0; border: 1px solid var(--line); border-bottom: 0; padding: 2px 2px 0; box-shadow: inset 1px 1px var(--soft); }
  .doc { height: 100%; border: 1px solid var(--soft); border-bottom: 0; display: flex; flex-direction: column; }
  .doc-bar { display: flex; align-items: center; height: 31px; flex: none; border-bottom: 2px solid var(--soft); padding: 0 9px; }
  .btn { width: 55px; height: 24px; border: 1px solid #adadad; background: linear-gradient(#f1f1f1, #e3e3e3); }
  .btn.wide { width: 70px; }
  .field { display: flex; align-items: center; gap: 8px; margin-left: 37px; }
  .field.layout { margin-left: 23px; }
  .combo { position: relative; display: flex; width: 131px; height: 20px; }
  .combo select { appearance: none; width: 100%; border: 1px solid #999; padding: 0 20px 0 3px; }
  .combo i { position: absolute; right: 1px; top: 1px; width: 17px; height: 18px; border: 1px solid #bbb; background: #eee; display: grid; place-items: center; pointer-events: none; }
  .combo svg { width: 8px; height: 8px; fill: none; stroke: #777; stroke-width: 2; }
  .actions { display: flex; gap: 10px; margin-left: 30px; }
  .bulb { width: 18px; height: 22px; margin-left: auto; }

  .canvas { flex: 1; min-height: 0; position: relative; }
  .form { position: absolute; left: 9px; top: 9px; width: 824px; height: 603px; background: #ebebeb; border: 1px solid #c0c0c0; padding: 0 6px 7px; display: flex; flex-direction: column; }
  .handle { position: absolute; width: 4px; height: 4px; background: #000; }
  .handle.tl, .handle.tc, .handle.tr { top: -6px; }
  .handle.tl, .handle.ml, .handle.bl { left: -6px; }
  .handle.tc { left: calc(50% - 2px); }
  .handle.ml { top: calc(50% - 2px); }
  .handle.bl { bottom: -6px; }
  .handle.tr { right: -7px; }
  .handle.mr, .handle.bc, .handle.br { width: 6px; height: 6px; background: #fff; border: 1px solid #000; }
  .handle.mr { right: -8px; top: calc(50% - 3px); }
  .handle.bc { left: calc(50% - 3px); bottom: -8px; }
  .handle.br { right: -8px; bottom: -8px; }
  .form-title { display: flex; align-items: center; height: 30px; flex: none; padding: 0 1px 1px 3px; }
  .form-title h1 { font-size: 15px; line-height: 20px; color: #999; margin: 0 auto 0 4px; }
  .min { width: 7px; height: 2px; background: #222; margin-right: 19px; }
  .max { width: 9px; height: 7px; border: 1px solid #222; border-top-width: 2px; margin-right: 10px; }
  .close { width: 37px; height: 17px; background: #c75050; display: grid; place-items: center; }
  .close .cross { stroke: #fff; }
  .form-body { flex: 1; background: #fefefe; border: 1px solid var(--soft); display: flex; flex-direction: column; }
  .form-tools { display: flex; align-items: center; height: 28px; padding-left: 6px; }
  .grip { width: 3px; height: 16px; border: 1px solid #bbb; border-width: 0 1px; margin-right: 2px; }
  .form-tools button { display: flex; align-items: center; gap: 4px; padding: 0 5px; }
  .filter-box { height: 52px; border: 1px dotted #000; }
  .splitter { height: 101px; display: flex; justify-content: center; align-items: flex-end; gap: 2px; padding: 0 0 5px; }
  .splitter i { width: 2px; height: 2px; background: #777; }
  .grid { flex: 1; border: 1px solid var(--line); }
  .grid-head { height: 21px; border-bottom: 1px solid var(--line); }
  .grid-head span, .grid-row span { display: flex; align-items: center; justify-content: center; width: 19px; height: 100%; border-right: 1px solid var(--line); }
  .grid-row { height: 21px; }
  .grid-row svg { width: 4px; height: 7px; }

  .side { margin-top: 1px; display: grid; grid-template-rows: minmax(0, 1fr) 270px; row-gap: 4px; min-height: 0; }
  .panel { border: 1px solid var(--line); border-right: 0; padding-left: 1px; display: flex; flex-direction: column; min-height: 0; }
  .panel:last-child { border-bottom: 0; padding-bottom: 2px; }
  .panel h2 { padding: 6px 0 9px 12px; flex: none; }
  .mini { display: flex; align-items: center; height: 29px; flex: none; padding-left: 4px; }
  .mini button { padding: 4px 5px; }
  .mini hr { width: 1px; height: 22px; border: 0; background: #bdbdbd; margin: 0 3px; }
  .mini .on { background: #b3d7f0; }
  .props-bar { padding-left: 2px; }
  .query, .object { height: 20px; flex: none; width: 100%; border: 1px solid var(--line); border-right: 0; padding-left: 3px; }
  .query { border-bottom-width: 2px; padding-top: 2px; }
  .tree { flex: 1; min-height: 0; overflow: hidden; border-left: 1px solid var(--line); border-bottom: 1px solid var(--line); padding-top: 2px; }
  .tree li { display: flex; height: 18px; }
  .twist { width: 8px; height: 8px; margin: 6px 5px 0 0; fill: #777; flex: none; }
  .tree span { border-left: 1px solid #d0d0d0; padding-left: 4px; line-height: 18px; white-space: nowrap; }
  .panel-tabs { display: flex; height: 29px; flex: none; align-items: center; }
  .panel-tabs button { height: 24px; padding: 0 11px; border-right: 1px solid var(--soft); }
  .panel-tabs .on { color: #0072c6; padding: 0 13px 0 12px; }
  .object { margin-bottom: 3px; }
  .props { flex: 1; min-height: 0; overflow: hidden; border: 1px solid var(--line); border-right: 0; }
  .props h3 { font-size: 12px; line-height: 19px; font-weight: 700; color: #0072c6; padding-left: 19px; }
  table { border-collapse: collapse; table-layout: fixed; width: 100%; margin-left: 15px; border-top: 1px solid var(--line); border-left: 1px solid var(--line); }
  th, td { height: 18px; padding: 0 0 0 4px; line-height: 17px; border-bottom: 1px solid var(--soft); text-align: left; font-weight: 400; white-space: nowrap; }
  th { width: 391px; padding-left: 18px; border-right: 1px solid var(--soft); }
  .picker th, .picker td { height: 19px; line-height: 18px; }
  .readonly { color: #999; }
  .current th { background: #e4f0fa; }

  .watermark { position: absolute; right: 4px; bottom: 16px; font: 45px/50px "Liberation Sans", sans-serif; color: rgba(225, 225, 225, 0.75); text-shadow: 1px 2px 2px rgba(90, 90, 90, 0.6); pointer-events: none; white-space: nowrap; }
</style>
